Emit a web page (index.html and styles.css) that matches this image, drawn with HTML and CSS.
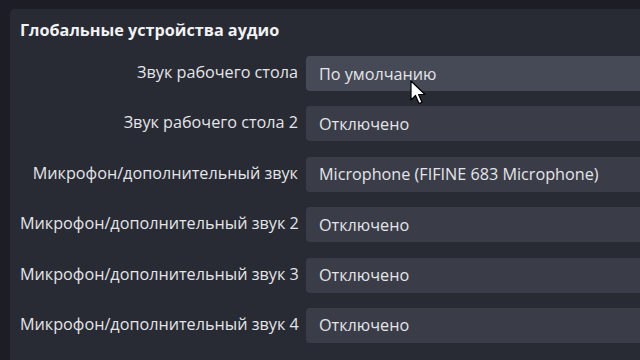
FILE: index.html
```html
<!DOCTYPE html>
<html lang="ru">
<head>
<meta charset="utf-8">
<link rel="stylesheet" href="styles.css">
</head>
<body>
<div class="panel">
  <div class="title">Глобальные устройства аудио</div>
  <div class="rows">
    <div class="row">
      <div class="label">Звук рабочего стола</div>
      <div class="combo hover">По умолчанию</div>
    </div>
    <div class="row">
      <div class="label">Звук рабочего стола 2</div>
      <div class="combo">Отключено</div>
    </div>
    <div class="row">
      <div class="label">Микрофон/дополнительный звук</div>
      <div class="combo">Microphone (FIFINE 683 Microphone)</div>
    </div>
    <div class="row">
      <div class="label">Микрофон/дополнительный звук 2</div>
      <div class="combo">Отключено</div>
    </div>
    <div class="row">
      <div class="label">Микрофон/дополнительный звук 3</div>
      <div class="combo">Отключено</div>
    </div>
    <div class="row">
      <div class="label">Микрофон/дополнительный звук 4</div>
      <div class="combo">Отключено</div>
    </div>
  </div>
</div>
<svg class="cursor" width="18" height="26" viewBox="0 0 18 26">
  <path d="M1 1 L1 20 L5.5 15.5 L9 23.5 L12 22.2 L8.6 14.5 L15 14.5 Z" fill="#fff" stroke="#000" stroke-width="1.2" stroke-linejoin="round"/>
</svg>
</body>
</html>
```
FILE: styles.css
```css
html, body {
  margin: 0;
  padding: 0;
  width: 640px;
  height: 360px;
  overflow: hidden;
  background: #1d1e25;
  font-family: "Open Sans", "Noto Sans", sans-serif;
  color: #e4e5e8;
}
.panel {
  margin: 9px 0 0 10px;
  height: 360px;
  background: #282a34;
  border-radius: 5px 0 0 0;
  padding: 11px 0 0 10px;
  box-sizing: border-box;
}
.title {
  font-size: 16.2px;
  font-weight: 700;
  line-height: 20px;
  color: #f2f2f4;
  letter-spacing: 0;
}
.rows {
  margin-top: 16px;
  display: flex;
  flex-direction: column;
  gap: 15.4px;
}
.row {
  display: flex;
  align-items: center;
}
.label {
  width: 278px;
  text-align: right;
  font-size: 16.2px;
  padding-right: 8px;
  margin-top: -3px;
  white-space: nowrap;
}
.combo {
  flex: 1;
  height: 35px;
  background: #3a3d48;
  border-radius: 4px 0 0 4px;
  padding-left: 13px;
  display: flex;
  align-items: center;
  font-size: 16.2px;
  white-space: nowrap;
}
.combo.hover {
  background: #464a56;
}
.cursor {
  position: absolute;
  left: 410px;
  top: 80px;
}
```
